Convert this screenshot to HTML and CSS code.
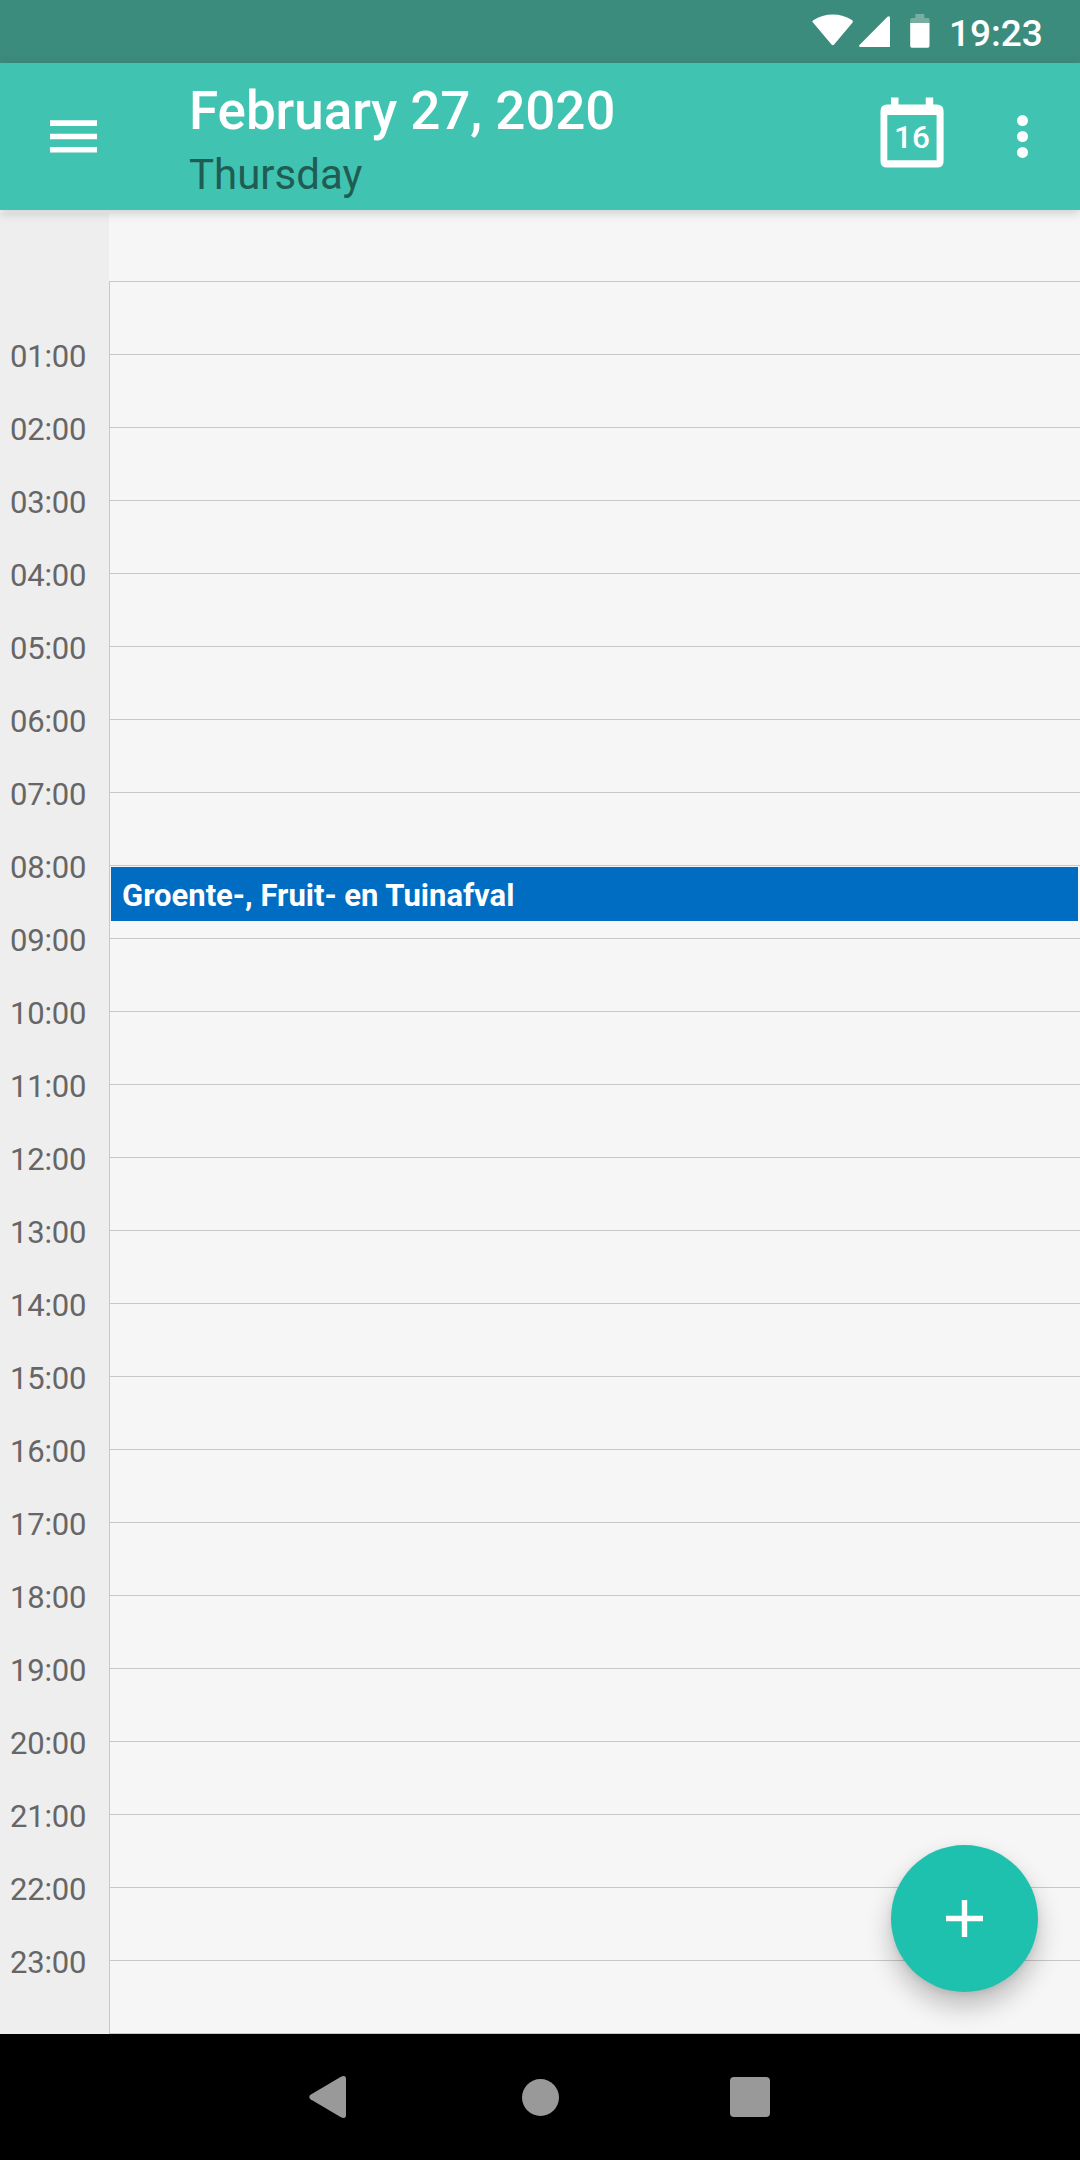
FILE: index.html
```html
<!DOCTYPE html>
<html lang="en">
<head>
<meta charset="utf-8">
<title>Calendar</title>
<link rel="stylesheet" href="styles.css">
</head>
<body>
<div class="screen">
  <div class="status-bar">
    <svg class="wifi" width="42" height="33" viewBox="0 0 42 33"><path d="M1.400 9C-.1 7.900.2 7 1.300 6.200Q10 .5 20.800.5T40.300 6.200Q41.400 7.900 40.200 9L22.100 30.500Q20.800 32 19.500 30.500Z"/></svg>
    <svg class="signal" width="31" height="31" viewBox="0 0 31 31"><path d="M0 29.500 28.500.8Q31-.8 31 2V31H1.500Q0 31 0 29.500Z"/></svg>
    <svg class="battery" width="20" height="34" viewBox="0 0 20 34"><path class="battery-empty" d="M5.300 0h9v4H18q1.500 0 1.500 1.500V9H.2V5.500Q.2 4 1.700 4h3.600Z"/><path d="M.2 9h19.300v23q0 1.700-1.700 1.700H1.900Q.2 33.700.2 32Z"/></svg>
    <span class="clock">19:23</span>
  </div>
  <header class="app-bar">
    <svg class="menu" width="48" height="34" viewBox="0 0 48 34"><path d="M0 .3h47v5.600H0zM0 13.700h47v5.600H0zM0 27h47v5.600H0z"/></svg>
    <div class="heading">
      <h1 class="date">February 27, 2020</h1>
      <div class="weekday">Thursday</div>
    </div>
    <div class="today">
      <svg width="64" height="72" viewBox="0 0 64 72"><path fill-rule="evenodd" d="M11 .5h7.500V7.500h27.200V.5h7.500V7.500h3.500Q63.600 7.500 63.600 14v50q0 6.600-6.600 6.600H7.100Q.5 70.600.5 64V14Q.5 7.500 7.100 7.500H11ZM7.300 18v45.300h49.300V18Z"/></svg>
      <span class="today-number">16</span>
    </div>
    <svg class="more" width="12" height="44" viewBox="0 0 12 44"><circle cx="5.500" cy="5.600" r="5.500"/><circle cx="5.500" cy="21.500" r="5.500"/><circle cx="5.500" cy="37.400" r="5.500"/></svg>
  </header>
  <main class="day-view">
    <div class="gutter">
      <div class="time">01:00</div><div class="time">02:00</div><div class="time">03:00</div><div class="time">04:00</div>
      <div class="time">05:00</div><div class="time">06:00</div><div class="time">07:00</div><div class="time">08:00</div>
      <div class="time">09:00</div><div class="time">10:00</div><div class="time">11:00</div><div class="time">12:00</div>
      <div class="time">13:00</div><div class="time">14:00</div><div class="time">15:00</div><div class="time">16:00</div>
      <div class="time">17:00</div><div class="time">18:00</div><div class="time">19:00</div><div class="time">20:00</div>
      <div class="time">21:00</div><div class="time">22:00</div><div class="time">23:00</div>
    </div>
    <div class="hours">
      <div class="hour"></div><div class="hour"></div><div class="hour"></div><div class="hour"></div>
      <div class="hour"></div><div class="hour"></div><div class="hour"></div><div class="hour"></div>
      <div class="hour"><div class="event">Groente-, Fruit- en Tuinafval</div></div>
      <div class="hour"></div><div class="hour"></div><div class="hour"></div><div class="hour"></div>
      <div class="hour"></div><div class="hour"></div><div class="hour"></div><div class="hour"></div>
      <div class="hour"></div><div class="hour"></div><div class="hour"></div><div class="hour"></div>
      <div class="hour"></div><div class="hour"></div><div class="hour"></div>
    </div>
    <div class="fab"><svg width="37" height="37" viewBox="0 0 37 37"><path d="M15.800 0h5.400v15.800H37v5.400H21.200V37h-5.400V21.200H0v-5.400h15.800z"/></svg></div>
  </main>
  <nav class="nav-bar">
    <svg class="back" width="37" height="42" viewBox="0 0 37 42"><path d="M31.500 1Q37-1.500 37 3v36q0 4.500-5.500 2L1.500 23.200Q-1 21 1.500 18.800Z"/></svg>
    <svg class="home" width="37" height="37" viewBox="0 0 37 37"><circle cx="18.500" cy="18.500" r="18.500"/></svg>
    <svg class="recents" width="40" height="40" viewBox="0 0 40 40"><rect width="40" height="40" rx="4"/></svg>
  </nav>
</div>
</body>
</html>
```
FILE: styles.css
```css
* { box-sizing: border-box; }
body { margin: 0; font-family: Roboto, sans-serif; }
svg { display: block; flex: none; fill: #fff; }

.screen {
  display: flex;
  flex-direction: column;
  width: 1080px;
  height: 2160px;
  overflow: hidden;
  background: #f6f6f6;
}

.status-bar {
  display: flex;
  justify-content: flex-end;
  align-items: flex-start;
  height: 63px;
  padding-right: 37px;
  background: #3b8c7d;
}
.wifi { margin: 14px 5px 0 0; }
.signal { margin: 16px 20px 0 0; }
.battery { margin-top: 14px; }
.battery-empty { opacity: .3; }
.clock {
  width: 94px;
  margin: 12px 0 0 19px;
  font-size: 37px;
  font-weight: 500;
  line-height: 43px;
  color: #fff;
}

.app-bar {
  position: relative;
  z-index: 1;
  display: flex;
  align-items: flex-start;
  height: 147px;
  padding: 0 51px 0 50px;
  background: #41c3b1;
  box-shadow: 0 3px 10px rgba(0, 0, 0, .17);
}
.menu { margin-top: 57px; }
.heading { flex: 1; padding: 17px 0 0 91px; }
.date {
  margin: 0;
  font-size: 53px;
  font-weight: 500;
  line-height: 62px;
  letter-spacing: -.08px;
  color: #fff;
}
.weekday { margin-top: 8px; font-size: 42px; line-height: 50px; color: #1f5c53; }
.today { display: grid; margin: 34px 73px 0 0; }
.today > * { grid-area: 1 / 1; }
.today-number {
  padding-top: 21px;
  font-size: 31.5px;
  font-weight: 500;
  line-height: 40px;
  text-align: center;
  color: #fff;
}
.more { margin-top: 52px; }

.day-view { position: relative; display: flex; height: 1824px; }
.gutter {
  width: 109px;
  margin-top: 3px;
  padding: 107px 0 0 10px;
  background: #eee;
}
.time {
  height: 73px;
  font-size: 31px;
  line-height: 73px;
  letter-spacing: -.2px;
  color: #666;
}
.hours {
  flex: 1;
  height: 1753px;
  margin-top: 71px;
  border-left: 1px solid #c8c8c8;
  border-bottom: 1px solid #c8c8c8;
}
.hour { height: 73px; padding: 1px 2px 0 1px; border-top: 1px solid #c8c8c8; }
.event {
  height: 54px;
  padding-left: 11px;
  font-size: 31px;
  font-weight: 700;
  line-height: 58px;
  color: #fff;
  background: #006dc3;
}

/* Floating action button over the grid */
.fab {
  position: absolute;
  right: 42px;
  bottom: 42px;
  display: grid;
  place-items: center;
  width: 147px;
  height: 147px;
  border-radius: 50%;
  background: #1ec1ad;
  box-shadow: 0 14px 26px rgba(0, 0, 0, .24), 0 2px 6px rgba(0, 0, 0, .08);
}

.nav-bar {
  display: flex;
  flex: 1;
  align-items: center;
  padding-left: 309px;
  background: #000;
}
.nav-bar svg { fill: #999; }
.home { margin: 1px 171px 0 176px; }
```
